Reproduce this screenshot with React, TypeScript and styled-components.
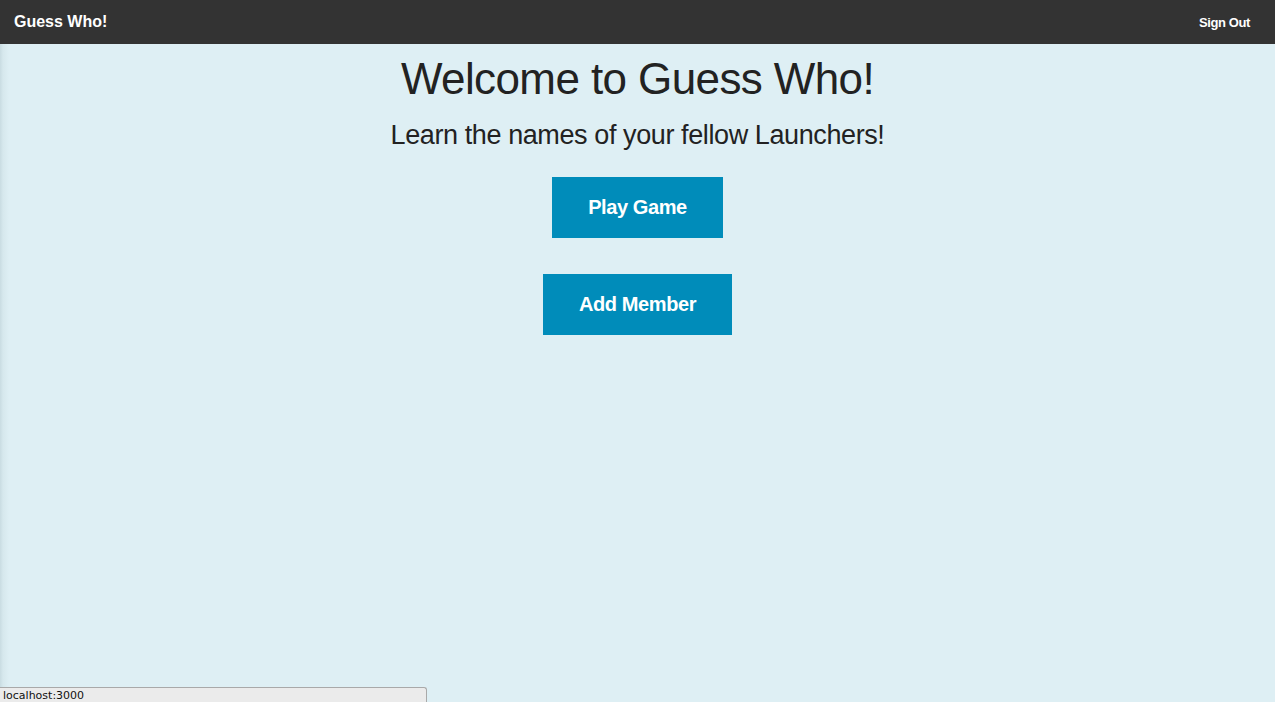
import React from 'react';
import styled, { createGlobalStyle } from 'styled-components';

const GlobalStyle = createGlobalStyle`
  html, body {
    margin: 0;
    padding: 0;
    height: 100%;
  }
  body {
    background: #deeff4;
    font-family: 'Liberation Sans', Arial, sans-serif;
    color: #222222;
  }
  #root {
    min-height: 100vh;
  }
`;

const Page = styled.div`
  min-height: 100vh;
  background: linear-gradient(to right, #c9dce2 0, #d6e8ed 3px, #deeff4 9px);
`;

const TopBar = styled.nav`
  height: 44px;
  background: #333333;
  display: flex;
  align-items: center;
  justify-content: space-between;
  padding: 0 25px 0 14px;
`;

const Brand = styled.a`
  color: #ffffff;
  font-size: 16px;
  font-weight: 700;
  letter-spacing: 0;
  text-decoration: none;
`;

const NavLink = styled.a`
  color: #ffffff;
  font-size: 13px;
  font-weight: 700;
  letter-spacing: -0.4px;
  text-decoration: none;
`;

const Main = styled.main`
  display: flex;
  flex-direction: column;
  align-items: center;
  padding-top: 9px;
`;

const Title = styled.h1`
  margin: 0;
  font-size: 44px;
  font-weight: 300;
  line-height: 52px;
  letter-spacing: -0.6px;
  color: #222222;
`;

const Subtitle = styled.h3`
  margin: 14px 0 0;
  font-size: 27px;
  font-weight: 300;
  line-height: 32px;
  letter-spacing: -0.4px;
  color: #222222;
`;

const Actions = styled.div`
  margin-top: 26px;
  display: flex;
  flex-direction: column;
  align-items: center;
  gap: 36px;
`;

const Button = styled.button`
  height: 61px;
  padding: 0 36px;
  border: none;
  background: #008cba;
  color: #ffffff;
  font-family: 'Liberation Sans', Arial, sans-serif;
  font-size: 20px;
  font-weight: 700;
  letter-spacing: -0.4px;
  cursor: pointer;
`;

const StatusBar = styled.div`
  position: fixed;
  left: 0;
  bottom: 0;
  width: 423px;
  height: 14px;
  background: #ebebeb;
  border: 1px solid #a9a9a9;
  border-left: none;
  border-bottom: none;
  border-top-right-radius: 3px;
  font-family: 'DejaVu Sans', sans-serif;
  font-size: 11px;
  line-height: 15px;
  padding-left: 3px;
  color: #111111;
`;

const App: React.FC = () => {
  return (
    <Page>
      <GlobalStyle />
      <TopBar>
        <Brand href="#">Guess Who!</Brand>
        <NavLink href="#">Sign Out</NavLink>
      </TopBar>
      <Main>
        <Title>Welcome to Guess Who!</Title>
        <Subtitle>Learn the names of your fellow Launchers!</Subtitle>
        <Actions>
          <Button>Play Game</Button>
          <Button>Add Member</Button>
        </Actions>
      </Main>
      <StatusBar>localhost:3000</StatusBar>
    </Page>
  );
};

export default App;
